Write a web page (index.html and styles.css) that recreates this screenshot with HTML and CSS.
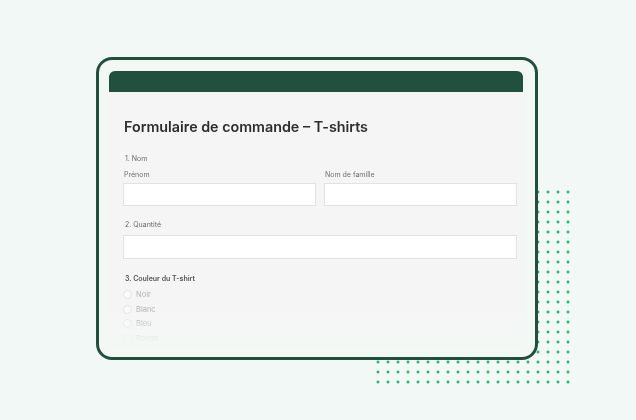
FILE: index.html
```html
<!DOCTYPE html>
<html lang="fr">
<head>
    <meta charset="UTF-8">
    <meta name="viewport" content="width=device-width, initial-scale=1.0">
    <title>Formulaire de commande</title>
    <link rel="stylesheet" href="styles.css">
</head>
<body>
    <div class="stage">
        <div class="dots"></div>

        <div class="frame">
            <div class="card">
                <div class="card-header"></div>
                <div class="card-body">
                    <h1>Formulaire de commande – T-shirts</h1>

                    <div class="question q-name">
                        <p class="q-title">1. Nom</p>
                        <div class="name-row">
                            <div class="field">
                                <label>Prénom</label>
                                <div class="input"></div>
                            </div>
                            <div class="field">
                                <label>Nom de famille</label>
                                <div class="input"></div>
                            </div>
                        </div>
                    </div>

                    <div class="question">
                        <p class="q-title">2. Quantité</p>
                        <div class="input input-wide"></div>
                    </div>

                    <div class="question">
                        <p class="q-title strong">3. Couleur du T-shirt</p>
                        <ul class="choices">
                            <li><span class="radio"></span>Noir</li>
                            <li><span class="radio"></span>Blanc</li>
                            <li><span class="radio"></span>Bleu</li>
                            <li><span class="radio"></span>Rouge</li>
                        </ul>
                    </div>
                </div>
            </div>
        </div>
    </div>
</body>
</html>
```

FILE: styles.css
```css
body {
    margin: 0;
    padding: 0;
    background-color: #f2f8f5;
    font-family: "Inter", "Liberation Sans", sans-serif;
}

.stage {
    position: relative;
    width: 636px;
    height: 420px;
    overflow: hidden;
    padding-top: 57px;
    box-sizing: border-box;
}

/* green dot pattern behind the frame */
.dots {
    position: absolute;
    left: 373px;
    top: 187px;
    width: 200px;
    height: 200px;
    background-image: radial-gradient(circle, #1cb972 1.3px, transparent 1.7px);
    background-size: 10px 10px;
}

.frame {
    position: relative;
    margin-left: 96px;
    width: 442px;
    height: 303px;
    box-sizing: border-box;
    border: 3px solid #234f3e;
    border-radius: 16px;
    background-color: #f3f8f5;
    padding: 11px 12px 0 10px;
    overflow: hidden;
}

.card-header {
    height: 21px;
    background-color: #22503f;
    border-radius: 6px 6px 0 0;
}

.card-body {
    height: 262px;
    background-color: #f5f5f5;
    padding: 25px 6px 0 14px;
    box-sizing: border-box;
    -webkit-mask-image: linear-gradient(to bottom, #000 0, #000 220px, rgba(0, 0, 0, 0.6) 234px, rgba(0, 0, 0, 0.15) 247px, transparent 258px);
    mask-image: linear-gradient(to bottom, #000 0, #000 220px, rgba(0, 0, 0, 0.6) 234px, rgba(0, 0, 0, 0.15) 247px, transparent 258px);
}

h1 {
    margin: 0 0 16.5px 1px;
    font-size: 14.3px;
    line-height: 20px;
    font-weight: 600;
    color: #2d2d2d;
}

.q-title {
    margin: 0 0 7px 2px;
    font-size: 7px;
    line-height: 9px;
    color: #6b6b6b;
}

.q-title.strong {
    font-weight: 600;
    color: #555555;
    margin-bottom: 5px;
}

.name-row {
    display: flex;
    gap: 8px;
}

.field {
    flex: 1;
}

.field label {
    display: block;
    margin: 0 0 4.5px 1px;
    font-size: 7px;
    line-height: 9px;
    color: #707070;
}

.input {
    height: 23px;
    box-sizing: border-box;
    background-color: #ffffff;
    border: 1px solid #e2e2e2;
}

.question {
    margin-bottom: 14.5px;
}

.q-name {
    margin-bottom: 13.5px;
}

.input-wide {
    height: 24px;
    margin-top: -0.5px;
}

.choices {
    list-style: none;
    margin: 0;
    padding: 0;
}

.choices li {
    display: flex;
    align-items: center;
    height: 14.6px;
    font-size: 7.5px;
    color: #b4b4b4;
}

.radio {
    width: 9px;
    height: 9px;
    box-sizing: border-box;
    border: 1px solid #e3e3e3;
    border-radius: 50%;
    background-color: #fafafa;
    margin-right: 4px;
}
```
